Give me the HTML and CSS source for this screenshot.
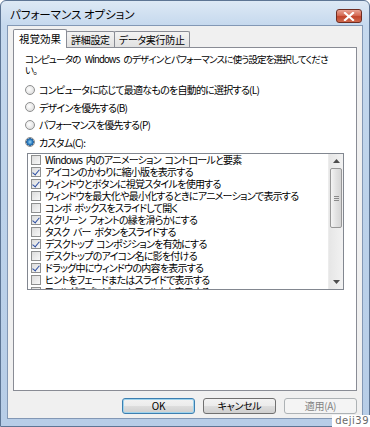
FILE: index.html
```html
<!DOCTYPE html>
<html lang="ja">
<head>
<meta charset="utf-8">
<title>パフォーマンス オプション</title>
<link rel="stylesheet" href="styles.css">
</head>
<body>
<div class="window">
  <div class="titlebar">
    <span class="title">パフォーマンス オプション</span>
    <div class="close">
      <svg width="12" height="9" viewBox="0 0 12 9"><path d="M2 1 L10 8 M10 1 L2 8" stroke="#fff" stroke-width="2.2" stroke-linecap="square"/></svg>
    </div>
  </div>
  <div class="client">
    <div class="tabs">
      <div class="tab active">視覚効果</div>
      <div class="tab">詳細設定</div>
      <div class="tab">データ実行防止</div>
    </div>
    <div class="panel">
      <p class="desc">コンピュータの Windows のデザインとパフォーマンスに使う設定を選択してくださ<br>い。</p>
      <div class="radios">
        <div class="radio-row"><span class="radio"></span><span>コンピュータに応じて最適なものを自動的に選択する(L)</span></div>
        <div class="radio-row"><span class="radio"></span><span>デザインを優先する(B)</span></div>
        <div class="radio-row"><span class="radio"></span><span>パフォーマンスを優先する(P)</span></div>
        <div class="radio-row"><span class="radio on"></span><span>カスタム(C):</span></div>
      </div>
      <div class="listbox">
        <div class="items">
          <div class="item"><span class="cb"></span>Windows 内のアニメーション コントロールと要素</div>
          <div class="item"><span class="cb on"></span>アイコンのかわりに縮小版を表示する</div>
          <div class="item"><span class="cb on"></span>ウィンドウとボタンに視覚スタイルを使用する</div>
          <div class="item"><span class="cb"></span>ウィンドウを最大化や最小化するときにアニメーションで表示する</div>
          <div class="item"><span class="cb"></span>コンボ ボックスをスライドして開く</div>
          <div class="item"><span class="cb on"></span>スクリーン フォントの縁を滑らかにする</div>
          <div class="item"><span class="cb"></span>タスク バー ボタンをスライドする</div>
          <div class="item"><span class="cb on"></span>デスクトップ コンポジションを有効にする</div>
          <div class="item"><span class="cb"></span>デスクトップのアイコン名に影を付ける</div>
          <div class="item"><span class="cb on"></span>ドラッグ中にウィンドウの内容を表示する</div>
          <div class="item"><span class="cb"></span>ヒントをフェードまたはスライドで表示する</div>
          <div class="item"><span class="cb on"></span>フォルダでプレビューとフィルタを表示する</div>
        </div>
        <div class="scrollbar">
          <div class="arrow"><svg width="7" height="4" viewBox="0 0 7 4"><path d="M0 4 L3.5 0 L7 4 Z" fill="#4d4d4d"/></svg></div>
          <div class="thumb"><span class="grip"></span></div>
          <div class="track"></div>
          <div class="arrow"><svg width="7" height="4" viewBox="0 0 7 4"><path d="M0 0 L3.5 4 L7 0 Z" fill="#4d4d4d"/></svg></div>
        </div>
      </div>
    </div>
    <div class="buttons">
      <div class="btn default">OK</div>
      <div class="btn">キャンセル</div>
      <div class="btn disabled">適用(A)</div>
    </div>
  </div>
  <div class="watermark">deji39</div>
</div>
</body>
</html>
```

FILE: styles.css
```css
* { box-sizing: border-box; }
html, body { margin: 0; padding: 0; }
body {
  width: 370px;
  height: 427px;
  overflow: hidden;
  background: #ffffff;
  font-family: "Noto Sans CJK JP", "Noto Sans", sans-serif;
  font-size: 10px;
  color: #000;
  font-feature-settings: "palt";
}
.window {
  position: relative;
  width: 370px;
  height: 427px;
  border: 1px solid #5d7594;
  border-radius: 6px 6px 0 0;
  background: linear-gradient(180deg, #dde9f5 0px, #c6d9ee 24px, #bcd2ea 200px, #b7cde7 100%);
  padding: 0 6px 7px 6px;
  display: flex;
  flex-direction: column;
}
.titlebar {
  height: 24px;
  display: flex;
  justify-content: space-between;
  padding-left: 3px;
}
.title {
  font-size: 11.5px;
  line-height: 26px;
  color: #000;
}
.close {
  margin-top: 8px;
  margin-right: 1px;
  width: 26px;
  height: 14px;
  border: 1px solid #6e2d22;
  border-radius: 3px;
  background: linear-gradient(180deg, #e9a394 0%, #d66b55 45%, #c2442b 55%, #cf6a4e 100%);
  display: flex;
  align-items: center;
  justify-content: center;
}
.client {
  flex: 1;
  border: 1px solid #8398b5;
  background: #f0f0f0;
  padding: 3px 5px 4px 5px;
  display: flex;
  flex-direction: column;
}
.tabs {
  height: 18px;
  display: flex;
  align-items: flex-end;
  position: relative;
  z-index: 1;
}
.tab {
  height: 16px;
  padding: 0 4px;
  border: 1px solid #898c95;
  border-bottom: none;
  border-radius: 2px 2px 0 0;
  background: linear-gradient(180deg, #f3f3f3, #e1e1e1);
  line-height: 15px;
  margin-left: -1px;
  font-size: 10px;
  letter-spacing: -0.3px;
}
.tab.active {
  height: 19px;
  margin-left: 0;
  margin-bottom: -1px;
  background: #ffffff;
  padding: 0 5px;
  line-height: 17px;
  font-size: 10.5px;
  letter-spacing: 0;
}
.panel {
  flex: 1;
  border: 1px solid #898c95;
  background: #ffffff;
  padding: 6px 11px 0 11px;
  letter-spacing: -0.75px;
  word-spacing: 2px;
}
.desc {
  margin: 0;
  font-size: 9.6px;
  letter-spacing: -0.9px;
  word-spacing: 3px;
  line-height: 11px;
  white-space: nowrap;
}
.radios {
  margin-top: 5px;
  display: flex;
  flex-direction: column;
}
.radio-row {
  height: 17.5px;
  display: flex;
  align-items: center;
  gap: 4px;
  white-space: nowrap;
}
.radio {
  width: 10px;
  height: 10px;
  border-radius: 50%;
  border: 1px solid #8e8f8f;
  background: radial-gradient(circle at 40% 40%, #ffffff 0%, #e6e6e6 60%, #d0d0d0 100%);
  flex: none;
}
.radio.on {
  background: radial-gradient(circle at 50% 50%, #9fd8f6 0px, #2a7cc0 2.5px, #1b5a9a 3.5px, #e8e8e8 4px, #d8d8d8 100%);
}
.listbox {
  margin: 2px 0 0 2px;
  width: 317px;
  height: 137px;
  border: 1px solid #828790;
  background: #fff;
  display: flex;
}
.items {
  flex: 1;
  overflow: hidden;
}
.item {
  height: 12px;
  line-height: 12px;
  display: flex;
  align-items: center;
  white-space: pre;
  padding-left: 3px;
}
.cb {
  width: 10px;
  height: 10px;
  border: 1px solid #8e8f8f;
  background: linear-gradient(135deg, #dcdcdc, #f8f8f8);
  margin-right: 4px;
  flex: none;
  position: relative;
}
.cb.on::after {
  content: "";
  position: absolute;
  left: 2px;
  top: 0px;
  width: 3px;
  height: 6px;
  border: solid #2d4fa3;
  border-width: 0 1.5px 1.5px 0;
  transform: rotate(40deg);
}
.scrollbar {
  width: 15px;
  flex: none;
  background: linear-gradient(90deg, #e6e6e6, #f2f2f2);
  border-left: 1px solid #ececec;
  display: flex;
  flex-direction: column;
}
.arrow {
  height: 14px;
  display: flex;
  align-items: center;
  justify-content: center;
}
.thumb {
  height: 60px;
  margin: 0 1px;
  border: 1px solid #979797;
  border-radius: 2px;
  background: linear-gradient(90deg, #f4f4f4, #e2e2e2 50%, #d5d5d5);
  display: flex;
  align-items: center;
  justify-content: center;
}
.grip {
  width: 5px;
  height: 5px;
  border-top: 1px solid #8a8a8a;
  border-bottom: 1px solid #8a8a8a;
  position: relative;
}
.grip::after {
  content: "";
  position: absolute;
  left: 0;
  right: 0;
  top: 1px;
  border-top: 1px solid #8a8a8a;
}
.track { flex: 1; }
.buttons {
  margin-top: 7px;
  height: 16px;
  display: flex;
  justify-content: flex-end;
  gap: 8px;
}
.btn {
  width: 73px;
  height: 16px;
  border: 1px solid #707070;
  border-radius: 3px;
  background: linear-gradient(180deg, #f2f2f2 0%, #ebebeb 50%, #dddddd 51%, #cfcfcf 100%);
  text-align: center;
  line-height: 14px;
  font-size: 10px;
  letter-spacing: -0.3px;
}
.btn.default {
  border-color: #3c7fb1;
  box-shadow: inset 0 0 0 1px #9fd3ec;
}
.btn.disabled {
  border-color: #adb2b5;
  background: #f4f4f4;
  color: #838383;
}
.watermark {
  position: absolute;
  right: -1px;
  bottom: -1px;
  background: #ffffff;
  color: #6a6a6a;
  font-family: "DejaVu Sans", sans-serif;
  font-size: 10px;
  line-height: 12px;
  padding: 0 1px 0 3px;
  letter-spacing: 0.5px;
}
```
